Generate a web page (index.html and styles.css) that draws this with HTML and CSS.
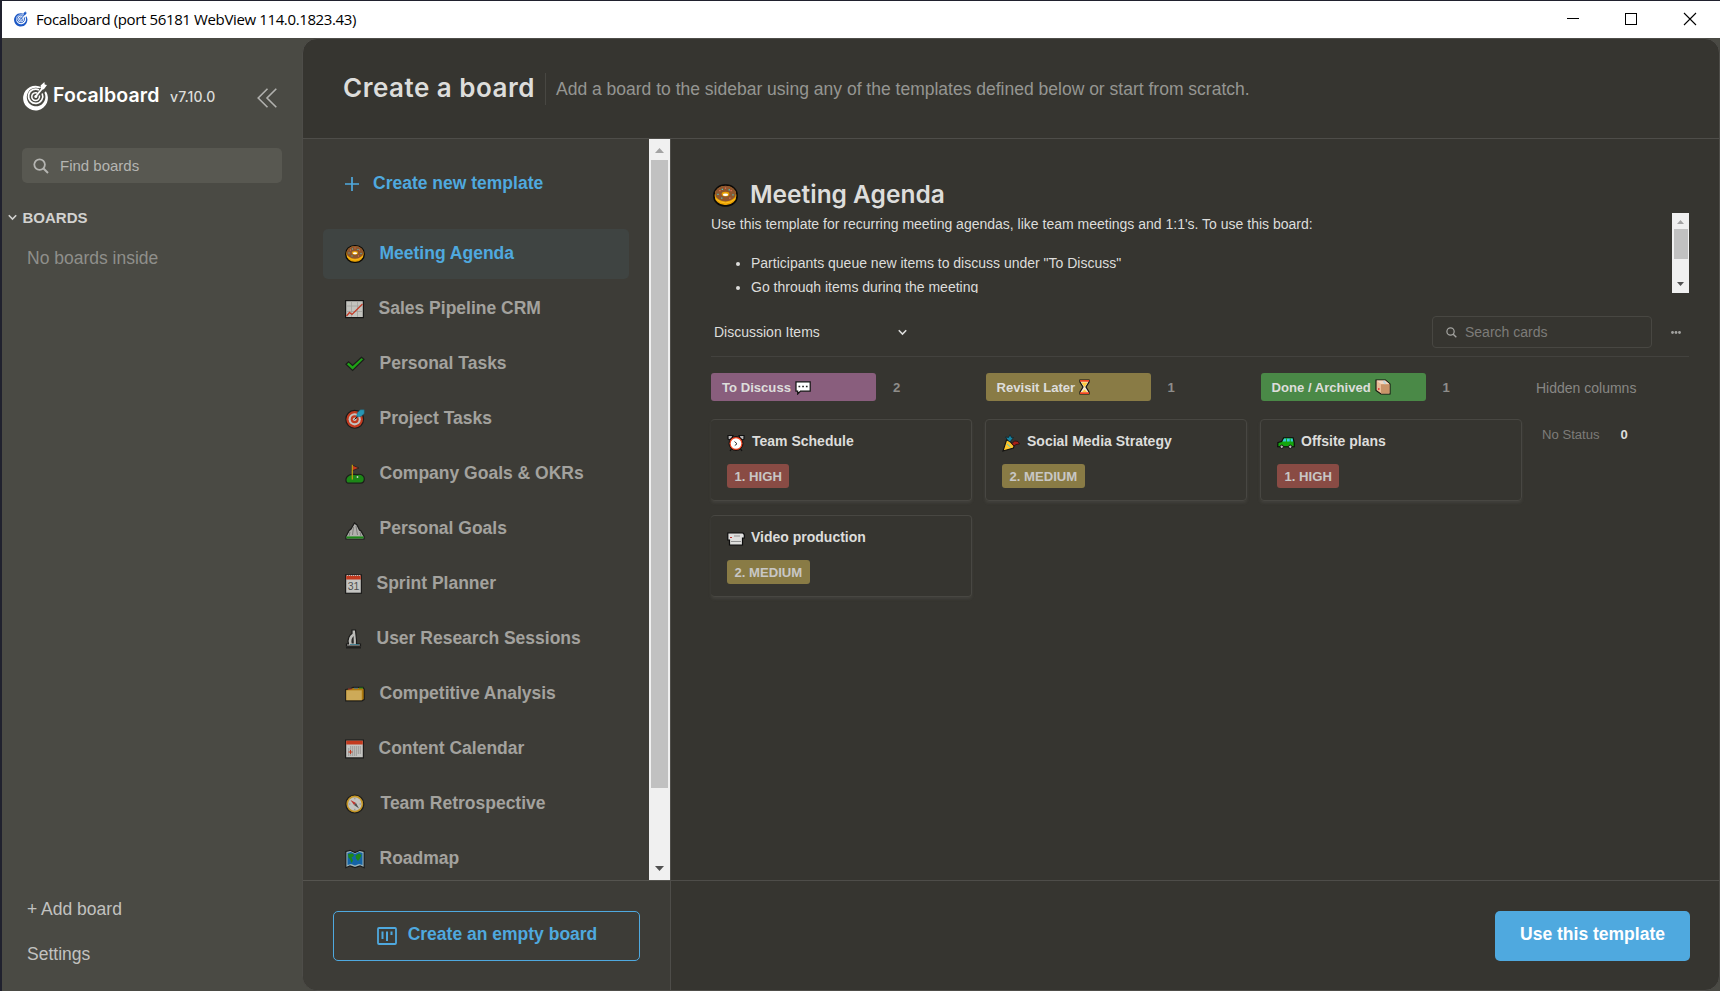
FILE: index.html
```html
<!DOCTYPE html>
<html lang="en">
<head>
<meta charset="utf-8">
<title>Focalboard</title>
<link rel="stylesheet" href="styles.css">
</head>
<body>
<svg class="defs" aria-hidden="true">
  <symbol id="logo" viewBox="0 0 26 29">
    <path fill-rule="evenodd" d="M18.500 5.200A12.400 12.400 0 1 0 22.900 9.300L21.400 10.800A9.300 9.300 0 1 1 16.400 6.300Z" fill="currentColor"/>
    <path d="M16 8A7.100 7.100 0 1 0 19.200 11.500" fill="none" stroke="currentColor" stroke-width="1.700"/>
    <path d="M14.200 11A3.900 3.900 0 1 0 16.400 13.500" fill="none" stroke="currentColor" stroke-width="1.500"/>
    <path d="M12.600 14.600L19.600 6" stroke="currentColor" stroke-width="1.800"/>
    <circle cx="12.800" cy="14.500" r="1.500" fill="currentColor"/>
    <path d="M17.600 3.600L21.400 0L21.700 2.400L24 3L20.900 7.300L18 7.800Z" fill="currentColor"/>
  </symbol>
  <symbol id="magnify" viewBox="0 0 16 16">
    <circle cx="6.6" cy="6.6" r="5.3" fill="none" stroke="currentColor" stroke-width="1.8"/>
    <path d="M10.5 10.5L15 15" stroke="currentColor" stroke-width="2"/>
  </symbol>
  <symbol id="chevron" viewBox="0 0 8 6"><path d="M.7 1L4 4.4L7.300 1" fill="none" stroke="currentColor" stroke-width="1.400"/></symbol>
  <symbol id="donut" viewBox="0 0 20 18">
    <rect x=".7" y=".7" width="18.6" height="16.6" rx="8.6" ry="8" fill="#e9a100" stroke="#0c0a08" stroke-width="1.3"/>
    <ellipse cx="10" cy="7.400" rx="8.400" ry="6.300" fill="#8e562e"/>
    <path d="M2 11.500Q10 18.500 18 11.500" fill="none" stroke="#ffc22a" stroke-width=".7"/>
    <ellipse cx="10" cy="7.800" rx="3.100" ry="1.900" fill="#e9a100"/><ellipse cx="10" cy="8.300" rx="2.100" ry="1" fill="#fff"/>
    <path d="M5 5h1M9.500 3h1M14 5h1M13 11h1" stroke="#e8705a"/><path d="M3.500 8h1M7 4h1M15.500 8.500h1M6.500 11h1M12.500 4.500h1" stroke="#44c8d0"/>
  </symbol>
  <symbol id="chart" viewBox="0 0 19 18"><rect x=".6" y=".6" width="17.800" height="17" fill="#f0f0ec" stroke="#0b0b0b" stroke-width="1.200"/><path d="M6.500 1v16M12.500 1v16M1 6h17M1 11.500h17" stroke="#c4c4c0" stroke-width=".8"/><path d="M1.500 16L4.500 12.500L7 14.500L17.500 4" fill="none" stroke="#ef3a20" stroke-width="1.300"/></symbol>
  <symbol id="check" viewBox="0 0 20 16"><path d="M1 8.300L3.600 5.800L7.600 9.500L16.500 1.200L19 3.300L7.600 14.500Z" fill="#16c60c" stroke="#101410" stroke-width="1.200"/></symbol>
  <symbol id="target" viewBox="0 0 20 20"><circle cx="9.700" cy="10.300" r="8.900" fill="#f03a17" stroke="#111" stroke-width="1.100"/><circle cx="9.700" cy="10.300" r="6.100" fill="#f1f1ef"/><circle cx="9.700" cy="10.300" r="4" fill="#f03a17"/><circle cx="9.700" cy="10.300" r="1.800" fill="#f1f1ef"/><path d="M9.500 10.500L14.500 5.500" stroke="#111"/><path d="M11.500 7.800L12.500 3.400L15.500 .8L19.200 .8L19.200 4.500L16 7.500Z" fill="#20b5df" stroke="#176f8b" stroke-width=".5"/></symbol>
  <symbol id="golf" viewBox="0 0 20 20"><path d="M4.500 11C7.500 9.500 10 11 12.500 10.500C16.500 9.500 19.300 12 19.300 14.800C19.300 17 18 19.200 15.500 19.200H3.500C.3 19.200-.5 13.500 4.500 11Z" fill="#13a10e" stroke="#101410" stroke-width="1.200"/><path d="M7 1L14 4L7 6.800Z" fill="#f03a17" stroke="#101410" stroke-width=".7"/><path d="M7.300 .8V15.500" stroke="#f2c400" stroke-width="1.200"/><circle cx="12.500" cy="13" r=".9" fill="#fff"/></symbol>
  <symbol id="mountain" viewBox="0 0 20 18"><path d="M1 14.500L4.200 8.500L6 7L9.500 1L12 3L14.500 8L16 9L19 14.500V17H1Z" fill="#d9d9d6" stroke="#111" stroke-width="1.200"/><path d="M8.500 5L7.500 13M11 4L12.500 13M5 10L4 14M15 10L16 14" stroke="#8f8f8c"/><path d="M1.500 14.400H18.500V16.500H1.500Z" fill="#13a10e"/></symbol>
  <symbol id="scope" viewBox="0 0 17 20"><path d="M7 1H10.500L11.500 11V15H15.500V17H1.500V15H3.500C2 10 4.500 6 7 4.500Z" fill="#e7e7e4" stroke="#111" stroke-width="1.200"/><path d="M8.600 7C6.200 9.500 6 12 6.700 14.600H8.800Z" fill="#222"/><path d="M1 18.800H16" stroke="#111" stroke-width="1.200"/><path d="M5 15.500h9" stroke="#2a8caa" stroke-width=".8"/></symbol>
  <symbol id="folder" viewBox="0 0 20 15"><path d="M.7 3L6 2L8 .8L18 .8L19.300 3V13L17 14.300H.7Z" fill="#d28c00" stroke="#111" stroke-width="1.200"/><path d="M1.300 3.800H16.800V13.700H1.300Z" fill="#fdcf63"/><path d="M3 2.500h4" stroke="#e33" stroke-width=".8"/><path d="M9 1.700h4" stroke="#2a85d0" stroke-width=".8"/><path d="M14 1.500h4" stroke="#13a10e"/></symbol>
  <symbol id="calendar" viewBox="0 0 19 19"><rect x=".6" y=".6" width="17.800" height="17.800" fill="#f2f2ef" stroke="#111" stroke-width="1.200"/><path d="M1.200 1.200H17.800V5H1.200Z" fill="#f03a17"/><path d="M5 7.500h11M3 9.500h13M3 11.500h13M3 13.500h13M3 15.500h9" stroke="#999" stroke-width="1" stroke-dasharray="1.300 .7"/><path d="M3.500 12.500h4M5.500 10.500v4" stroke="#f03a17"/></symbol>
  <symbol id="compass" viewBox="0 0 20 20"><circle cx="9.800" cy="10" r="9" fill="#f2b41f" stroke="#111" stroke-width="1.200"/><circle cx="9.800" cy="10" r="6.800" fill="#f0f0ed"/><path d="M5.500 6L11 9L9 11Z" fill="#e8302a"/><path d="M14 14.500L11 9L9 11Z" fill="#555"/><path d="M9.800 3.800v1.500M9.800 14.800v1.500M3.800 10h1.500M14.500 10h1.500" stroke="#999" stroke-width=".8"/></symbol>
  <symbol id="map" viewBox="0 0 20 19"><path d="M.8 2L5 .8L10 3L15 .8L19.200 2V18.200L15 16.500L10 18L5 16.500L.8 18.200Z" fill="#b9dce8" stroke="#111" stroke-width="1.200"/><path d="M2.500 3.500L6 2.500L10 4.500L14 2.500L17.500 3.500V15.500L14 14.500L10 16L6 14.500L2.500 15.500Z" fill="#0872cc"/><path d="M3 4.500L8 4L9 6.500L6.500 8L8 11L6.500 13.500L5 9.500L3.500 8ZM10.500 6L14 4L16.500 5.500L15 9L13 11.500L11 9Z" fill="#13a10e"/></symbol>
  <symbol id="bubble" viewBox="0 0 16 14"><path d="M1 .8H15.200V10.200H5.500L2.700 13V10.200H1Z" fill="#fff" stroke="#111" stroke-width="1.200"/><path d="M3.500 5.500h1.700M7.200 5.500h1.700M10.900 5.500h1.700" stroke="#222" stroke-width="1.500"/></symbol>
  <symbol id="hourglass" viewBox="0 0 11 16"><path d="M1 1H10V3L7 8L10 13V15H1V13L4 8L1 3Z" fill="#f5e6cf" stroke="#111" stroke-width="1.200"/><path d="M1 1.800H10M1 14.200H10" stroke="#ef4420" stroke-width="1.700"/><path d="M2.300 3.500H8.700L5.500 8ZM3 13L5.500 10.500L8 13Z" fill="#ffc93c"/></symbol>
  <symbol id="package" viewBox="0 0 16 16"><path d="M1 1H10.500L15 5V15H6L1 11.500Z" fill="#e9bb96" stroke="#14110e" stroke-width="1.100"/><path d="M1.500 1.500H10.300L14.500 5H6Z" fill="#f3d6c0"/><path d="M6 5.300H14.500V14.500H6Z" fill="#c99469"/><path d="M8.500 2L10.500 5" stroke="#b9d4dd" stroke-width="1.500"/><path d="M3 10h1.500" stroke="#d22" stroke-width="1.500"/></symbol>
  <symbol id="clock" viewBox="0 0 18 18"><path d="M1 5V1.500H6L5 4L2.500 6ZM17 5V1.500H12L13 4L15.500 6ZM3 17L5 14M15 17L13 14" fill="#b5b5b5" stroke="#111" stroke-width="1.200"/><circle cx="9" cy="9.500" r="7" fill="#ef4420" stroke="#111"/><circle cx="9" cy="9.500" r="5.300" fill="#fff"/><path d="M7.500 7.500L10 9.800L7.800 11.500" fill="none" stroke="#333"/></symbol>
  <symbol id="popper" viewBox="0 0 18 18"><path d="M1 17L4.500 6L7.500 7L12 12L11.500 14Z" fill="#fcc62c" stroke="#111" stroke-width="1.100"/><path d="M5.500 6L3.500 3L6.500 3.500L8 .8L9.500 3.500L11.500 3.500L9.500 6L8 8Z" fill="#1684a2" stroke="#0b2028" stroke-width=".7"/><path d="M10 9.500L12.500 7L16 7.500L17.500 10L14 10.500L12 12Z" fill="#a62018" stroke="#200b0b" stroke-width=".7"/><path d="M5 10L8.500 13" stroke="#49c4d5"/></symbol>
  <symbol id="camera" viewBox="0 0 18 14"><path d="M.8 1H16L17.300 2.500V6H15.500V13H2.500V8H.8Z" fill="#dededc" stroke="#0b0b0b" stroke-width="1.200"/><path d="M4 9.500H14M7 4h6" stroke="#909090" stroke-width="1.200"/><path d="M3 5.500h2" stroke="#b33"/></symbol>
  <symbol id="car" viewBox="0 0 19 13"><path d="M1 6L5 5L7 1H17L18.200 6V10.500H.8Z" fill="#14a50e" stroke="#0b0b0b" stroke-width="1.200"/><path d="M5.700 5L7.500 1.800H16.500L17 5Z" fill="#37c9df"/><path d="M10 1.500v4M14 1.500v4" stroke="#14a50e"/><circle cx="5" cy="10.500" r="1.800" fill="#bbb" stroke="#111"/><circle cx="14" cy="10.500" r="1.800" fill="#bbb" stroke="#111"/></symbol>
</svg>

<div class="window">
  <header class="titlebar">
    <svg class="app-icon"><use href="#logo"/></svg>
    <span class="window-title">Focalboard (port 56181 WebView 114.0.1823.43)</span>
    <svg class="window-controls" viewBox="0 0 130 14" fill="none" stroke="#000"><path d="M0 6.500H12"/><rect x="58.500" y="1.500" width="11" height="11"/><path d="M117 1L129 13M129 1L117 13" stroke-width="1.100"/></svg>
  </header>
  <div class="app">
    <aside class="sidebar">
      <div class="brand">
        <svg class="brand-logo"><use href="#logo"/></svg>
        <span class="brand-name">Focalboard</span>
        <span class="brand-version">v7.10.0</span>
        <svg class="collapse" viewBox="0 0 20 20" fill="none" stroke="currentColor" stroke-width="1.600"><path d="M10.500 .8L1.200 10L10.500 19.200M19.300 .8L10 10L19.300 19.200"/></svg>
      </div>
      <div class="find"><svg class="find-icon"><use href="#magnify"/></svg><span>Find boards</span></div>
      <div class="category"><svg class="chev"><use href="#chevron"/></svg><span>BOARDS</span></div>
      <div class="no-boards">No boards inside</div>
      <div class="sidebar-link">+ Add board</div>
      <div class="sidebar-link">Settings</div>
    </aside>
    <main class="main">
      <div class="head">
        <h1 class="head-title">Create a board</h1>
        <p class="head-text">Add a board to the sidebar using any of the templates defined below or start from scratch.</p>
      </div>
      <div class="content">
        <section class="templates">
          <div class="list-area">
            <div class="list">
              <div class="new-template"><svg class="plus" viewBox="0 0 14 14"><path d="M7 0V14M0 7H14" stroke="currentColor" stroke-width="1.700"/></svg>Create new template</div>
              <div class="item selected"><svg class="emoji h18"><use href="#donut"/></svg>Meeting Agenda</div>
              <div class="item"><svg class="emoji w19"><use href="#chart"/></svg>Sales Pipeline CRM</div>
              <div class="item"><svg class="emoji h16"><use href="#check"/></svg>Personal Tasks</div>
              <div class="item"><svg class="emoji"><use href="#target"/></svg>Project Tasks</div>
              <div class="item"><svg class="emoji"><use href="#golf"/></svg>Company Goals &amp; OKRs</div>
              <div class="item"><svg class="emoji h18 low"><use href="#mountain"/></svg>Personal Goals</div>
              <div class="item"><svg class="emoji w17" viewBox="0 0 17 20"><rect x=".6" y=".8" width="15.800" height="18.500" fill="#f2f2ef" stroke="#111" stroke-width="1.200"/><path d="M1.200 1.500H15.800V5.500H1.200Z" fill="#f03a17"/><path d="M2 1.500h13" stroke="#eee" stroke-dasharray="1 1"/><text x="8.500" y="15.800" text-anchor="middle" class="cal-number">31</text></svg>Sprint Planner</div>
              <div class="item"><svg class="emoji w17"><use href="#scope"/></svg>User Research Sessions</div>
              <div class="item"><svg class="emoji h16"><use href="#folder"/></svg>Competitive Analysis</div>
              <div class="item"><svg class="emoji w19"><use href="#calendar"/></svg>Content Calendar</div>
              <div class="item"><svg class="emoji w21"><use href="#compass"/></svg>Team Retrospective</div>
              <div class="item"><svg class="emoji"><use href="#map"/></svg>Roadmap</div>
            </div>
            <div class="scrollbar">
              <svg class="arrow" viewBox="0 0 9 5"><path d="M0 5L4.500 0L9 5Z" fill="#a3a3a3"/></svg>
              <div class="thumb"></div>
              <svg class="arrow" viewBox="0 0 9 5"><path d="M0 0L4.500 5L9 0Z" fill="#505050"/></svg>
            </div>
          </div>
          <div class="templates-foot">
            <button class="btn-outline"><svg class="board-icon" viewBox="0 0 20 18" fill="none" stroke="currentColor" stroke-width="1.800"><rect x="1" y="1" width="18" height="16" rx="1"/><path d="M5.500 4.500V12M10 4.500V14M14.500 4.500V8" stroke-width="2"/></svg>Create an empty board</button>
          </div>
        </section>
        <section class="detail">
          <div class="preview">
            <div class="preview-title"><svg class="title-emoji"><use href="#donut"/></svg><h2 class="preview-name">Meeting Agenda</h2></div>
            <div class="desc">
              <div class="desc-text">
                <p class="desc-line">Use this template for recurring meeting agendas, like team meetings and 1:1's. To use this board:</p>
                <ul class="desc-list"><li>Participants queue new items to discuss under "To Discuss"</li><li>Go through items during the meeting</li></ul>
              </div>
              <div class="scrollbar small">
                <svg class="arrow" viewBox="0 0 9 5"><path d="M0 5L4.500 0L9 5Z" fill="#a3a3a3"/></svg>
                <div class="thumb"></div>
                <svg class="arrow" viewBox="0 0 9 5"><path d="M0 0L4.500 5L9 0Z" fill="#505050"/></svg>
              </div>
            </div>
            <div class="toolbar">
              <span class="view-name">Discussion Items</span>
              <svg class="view-chev"><use href="#chevron"/></svg>
              <div class="search"><svg class="search-icon"><use href="#magnify"/></svg>Search cards</div>
              <svg class="dots" viewBox="0 0 10 3" fill="currentColor"><circle cx="1.500" cy="1.500" r="1.400"/><circle cx="5" cy="1.500" r="1.400"/><circle cx="8.500" cy="1.500" r="1.400"/></svg>
            </div>
            <div class="kanban">
              <div class="column first">
                <div class="column-head"><span class="label purple">To Discuss <svg class="e-bubble"><use href="#bubble"/></svg></span><span class="count">2</span></div>
                <div class="card"><div class="card-title"><svg class="card-emoji"><use href="#clock"/></svg>Team Schedule</div><span class="tag red">1. HIGH</span></div>
                <div class="card"><div class="card-title tight"><svg class="card-emoji"><use href="#camera"/></svg>Video production</div><span class="tag yellow">2. MEDIUM</span></div>
              </div>
              <div class="column">
                <div class="column-head"><span class="label yellow">Revisit Later <svg class="e-hour"><use href="#hourglass"/></svg></span><span class="count">1</span></div>
                <div class="card"><div class="card-title"><svg class="card-emoji"><use href="#popper"/></svg>Social Media Strategy</div><span class="tag yellow">2. MEDIUM</span></div>
              </div>
              <div class="column">
                <div class="column-head"><span class="label green">Done / Archived <svg class="e-box"><use href="#package"/></svg></span><span class="count">1</span></div>
                <div class="card"><div class="card-title tight"><svg class="card-emoji"><use href="#car"/></svg>Offsite plans</div><span class="tag red">1. HIGH</span></div>
              </div>
              <div class="hidden-col">
                <div class="hidden-head">Hidden columns</div>
                <div class="hidden-row"><span>No Status</span><b class="hidden-count">0</b></div>
              </div>
            </div>
          </div>
          <div class="detail-foot"><button class="btn-primary">Use this template</button></div>
        </section>
      </div>
    </main>
  </div>
</div>
</body>
</html>
```
FILE: styles.css
```css
* { box-sizing: border-box; }
body { margin: 0; background: #20212e; font-family: "Liberation Sans", Arial, sans-serif; font-size: 17.5px; color: #dddddb; overflow: hidden; }
h1, h2, p, ul { margin: 0; padding: 0; }
svg { flex: none; }
.defs { position: absolute; width: 0; height: 0; }
.cal-number { font: 10.500px "Liberation Sans", Arial, sans-serif; fill: #555; }

.window { display: flex; flex-direction: column; height: 991px; padding: 1px 0 0 2px; }
.titlebar { display: flex; align-items: center; height: 37px; flex: none; background: #fff; color: #000; padding: 0 23px 1px 12px; }
.app-icon { width: 14px; height: 16px; color: #1c58c5; }
.window-title { margin-left: 8px; font: 15px/20px "Open Sans", sans-serif; letter-spacing: -.37px; white-space: nowrap; }
.window-controls { width: 130px; height: 14px; margin-left: auto; }

.app { display: flex; flex: 1; min-height: 0; background: #4a4a44; }
.sidebar { width: 300px; flex: none; display: flex; flex-direction: column; padding-bottom: 14px; }
.brand { display: flex; align-items: center; height: 30px; margin: 43px 25px 0 21px; }
.brand-logo { width: 26px; height: 29px; color: #fff; }
.brand-name { margin: -2px 0 0 4px; width: 106px; font: 600 19.500px/28px Inter, sans-serif; color: #fff; letter-spacing: .1px; }
.brand-version { margin: 1px 0 0 11px; font: 500 14px/20px Inter, sans-serif; color: #dcdcda; letter-spacing: .1px; }
.collapse { width: 20px; height: 20px; margin: 4px 0 0 auto; color: #b1b1ae; }
.find { display: flex; align-items: center; gap: 11px; height: 35px; margin: 37px 20px 0; padding-left: 11px; border-radius: 5px; background: #585851; color: #b5b5b2; font-size: 15px; }
.find-icon { width: 16px; height: 16px; }
.category { display: flex; align-items: center; gap: 6px; height: 20px; margin: 24px 0 0 5.500px; font-size: 15px; font-weight: 600; color: #d2d2d0; }
.chev { width: 9px; height: 7px; }
.no-boards { margin: 21px 0 auto 25px; line-height: 20px; color: #8f8f8b; }
.sidebar-link { margin-left: 25px; line-height: 45px; color: #c2c2c0; }

.main { flex: 1; min-width: 0; display: flex; flex-direction: column; border: 1px solid #4e4d49; border-radius: 15px; background: #363530; overflow: hidden; }
.head { display: flex; align-items: center; height: 100px; flex: none; padding-left: 40px; border-bottom: 1px solid #4e4d49; }
.head-title { width: 203px; height: 32px; padding-bottom: 2px; border-right: 1px solid #484742; font: 600 26px/30px Inter, sans-serif; letter-spacing: .5px; white-space: nowrap; }
.head-text { margin: 0 0 0 10px; color: #959592; line-height: 24px; }
.content { display: flex; flex: 1; min-height: 0; }
.templates { width: 368px; flex: none; display: flex; flex-direction: column; background: #3d3c37; border-right: 1px solid #4e4d49; }
.list-area { display: flex; height: 741px; flex: none; }
.list { flex: 1; overflow: hidden; padding: 20px; }
.new-template { display: flex; align-items: center; gap: 14px; height: 50px; margin-bottom: 20px; padding: 0 0 1px 22px; font-weight: 600; color: #4fa9df; white-space: nowrap; }
.plus { width: 14px; height: 14px; }
.item { display: flex; align-items: center; gap: 14.500px; height: 50px; margin-bottom: 5px; padding: 0 0 2px 22px; border-radius: 5px; font-weight: 600; color: #a3a29e; white-space: nowrap; }
.item .emoji { opacity: .75; margin-top: 1px; }
.item .low { margin-top: 5px; }
.item.selected { background: #3f4442; color: #4fa9df; }
.item.selected .emoji { opacity: 1; }
.emoji { width: 20px; height: 20px; }
.h18 { height: 18px; }
.h16 { height: 16px; }
.w19 { width: 19px; }
.w17 { width: 17px; }
.w21 { width: 21px; padding-right: 1px; }
.scrollbar { width: 21px; display: flex; flex-direction: column; align-items: center; background: #f0f0f0; padding: 9px 0; }
.scrollbar .thumb { width: 17px; height: 628px; margin: 7px 0 auto; background: #c1c1c1; }
.arrow { width: 9px; height: 5px; }
.templates-foot { flex: 1; border-top: 1px solid #55544f; padding: 30px; }
.btn-outline, .btn-primary { display: flex; align-items: center; justify-content: center; height: 50px; border-radius: 5px; font: 600 17.500px "Liberation Sans", Arial, sans-serif; padding: 0 0 3px; white-space: nowrap; }
.btn-outline { width: 307px; gap: 11px; border: 1px solid #4fa9df; background: none; color: #4fa9df; padding-left: 1px; }
.board-icon { width: 20px; height: 18px; margin-top: 2px; }

.detail { flex: 1; min-width: 0; display: flex; flex-direction: column; }
.preview { height: 741px; flex: none; padding: 40px 30px 0 40px; font-size: 14px; }
.preview-title { display: flex; align-items: center; gap: 12px; height: 34px; padding: 0 0 4px 2px; }
.title-emoji { width: 25px; height: 23px; margin-top: 3px; }
.preview-name { font: 600 24.500px/30px Inter, sans-serif; white-space: nowrap; }
.desc { display: flex; height: 80px; overflow: hidden; }
.desc-text { flex: 1; }
.desc-line { line-height: 22px; }
.desc-list { margin-top: 16px; padding-left: 40px; line-height: 24px; }
.scrollbar.small { width: 17px; padding: 7px 0; }
.small .thumb { width: 14px; height: 30px; margin-top: 5px; }
.small .arrow { width: 7px; height: 4px; }
.toolbar { display: flex; align-items: center; height: 64px; padding: 15px 8px 0 3px; border-bottom: 1px solid #43423e; }
.view-name { width: 184px; }
.view-chev { width: 9px; height: 7px; }
.search { display: flex; align-items: center; gap: 8px; width: 220px; height: 32px; margin-left: auto; padding-left: 13px; border: 1px solid #484742; border-radius: 4px; color: #7d7c79; }
.search-icon { width: 11px; height: 11px; color: #a3a3a0; }
.dots { width: 10px; height: 3px; margin-left: 19px; color: #a3a3a0; }

.kanban { display: flex; gap: 13px; padding-top: 16px; }
.column { width: 262px; flex: none; }
.column-head { display: flex; align-items: center; height: 28px; margin-bottom: 18px; padding-left: .5px; font-size: 13.125px; font-weight: 600; }
.column.first { width: 261px; }
.first .card { border-left: 0; border-radius: 4px; padding-left: 16px; }
.first .column-head { padding-left: 0; }
.label { display: flex; align-items: center; width: 165px; height: 28px; padding-left: 11px; gap: 4px; border-radius: 3px; }
.purple { background: #895e7d; }
.yellow { background: #897b45; }
.green { background: #4a8947; }
.red { background: #894b44; }
.e-bubble { width: 16px; height: 14px; margin-top: 1px; }
.e-hour { width: 11px; height: 16px; }
.e-box { width: 16px; height: 16px; }
.count { margin-left: 17px; color: #8e8d8a; }
.card { height: 82px; margin-bottom: 14px; padding: 11px 16px 0; border: 1px solid #484742; border-radius: 4px; box-shadow: 0 2px 3px rgba(120,120,115,.18); }
.card-title { display: flex; align-items: center; gap: 7px; height: 20px; margin-bottom: 13px; font-weight: 600; white-space: nowrap; }
.card-title.tight { gap: 6px; }
.card-emoji { width: 18px; height: 18px; margin-top: 4px; }
.tag { display: flex; align-items: center; width: fit-content; height: 24px; padding: 0 7.500px; border-radius: 3px; font-size: 13.125px; font-weight: 600; color: #c8c7c5; }
.hidden-col { padding-left: 1px; color: #7d7c79; }
.hidden-head { line-height: 30px; color: #888784; }
.hidden-row { display: flex; align-items: center; gap: 21px; margin-top: 22px; padding-left: 6px; line-height: 20px; font-size: 13.125px; }
.hidden-count { color: #dddddb; }
.detail-foot { flex: 1; display: flex; justify-content: flex-end; align-items: flex-start; border-top: 1px solid #4e4d49; padding: 30px 29px 0 0; }
.btn-primary { width: 195px; border: 0; background: #4fa9df; color: #fff; }
```
